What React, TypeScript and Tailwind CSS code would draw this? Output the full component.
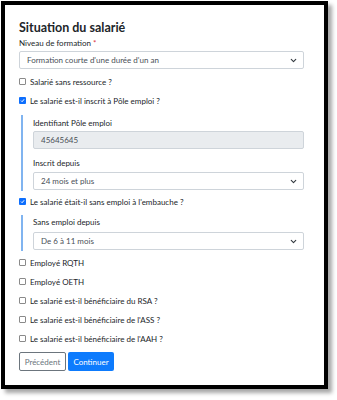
import { ChevronDown } from 'lucide-react';

const font = { fontFamily: 'Lato, "Open Sans", "Liberation Sans", sans-serif' };

function Select({ value }: { value: string }) {
    return (
        <div className="flex items-center justify-between h-[18px] border border-[#ced4da] rounded-[2px] bg-white pl-[7px] pr-[5px] text-[8px] text-[#495057]">
            <span>{value}</span>
            <ChevronDown size={9} strokeWidth={3} className="text-[#343a40]" />
        </div>
    );
}

function Check({ label, checked = false }: { label: string; checked?: boolean }) {
    return (
        <div className="flex items-center h-[19px] gap-[4px] text-[8px] text-[#212529]">
            {checked ? (
                <span className="w-[7px] h-[7px] rounded-[1px] bg-[#0d6efd] flex items-center justify-center">
                    <svg width="5" height="5" viewBox="0 0 10 10">
                        <path d="M2 5.2 L4.2 7.4 L8.2 2.6" fill="none" stroke="white" strokeWidth="2" />
                    </svg>
                </span>
            ) : (
                <span className="w-[7px] h-[7px] rounded-[1px] border border-[#8a8a8a] bg-white" />
            )}
            <span>{label}</span>
        </div>
    );
}

export default function App() {
    return (
        <div className="w-[337px] h-[400px] bg-white pt-[1px] pl-[1px]" style={font}>
            <div className="w-[327px] h-[388px] border-4 border-black bg-white shadow-[4px_4px_4px_rgba(0,0,0,0.35)] pl-[14px] pr-[20px] pt-[15px]">
                <h1 className="text-[12.5px] font-bold text-[#212529] leading-[16px]">Situation du salarié</h1>
                <div className="text-[8px] text-[#212529] leading-[12px] mt-[1px]">
                    Niveau de formation <span className="text-[#dc3545]">*</span>
                </div>
                <div className="mt-[2px]">
                    <Select value="Formation courte d'une durée d'un an" />
                </div>
                <div className="mt-[3px]">
                    <Check label="Salarié sans ressource ?" />
                    <Check label="Le salarié est-il inscrit à Pôle emploi ?" checked />
                </div>
                <div className="mt-[5px] ml-[2px] border-l-2 border-[#80b4f0] pl-[10px] pt-[2px] pb-[1px]">
                    <div className="text-[8px] text-[#212529] leading-[12px]">Identifiant Pôle emploi</div>
                    <div className="mt-[2px] h-[18px] border border-[#ced4da] rounded-[2px] bg-[#e9ecef] pl-[7px] text-[8px] text-[#495057] flex items-center">
                        45645645
                    </div>
                    <div className="text-[8px] text-[#212529] leading-[12px] mt-[8px]">Inscrit depuis</div>
                    <div className="mt-[3px]">
                        <Select value="24 mois et plus" />
                    </div>
                </div>
                <div className="mt-[1px]">
                    <Check label="Le salarié était-il sans emploi à l'embauche ?" checked />
                </div>
                <div className="mt-[4px] ml-[2px] border-l-2 border-[#80b4f0] pl-[10px] pt-[1px] pb-[1px]">
                    <div className="text-[8px] text-[#212529] leading-[12px]">Sans emploi depuis</div>
                    <div className="mt-[4px]">
                        <Select value="De 6 à 11 mois" />
                    </div>
                </div>
                <div className="mt-[2px]">
                    <Check label="Employé RQTH" />
                    <Check label="Employé OETH" />
                    <Check label="Le salarié est-il bénéficiaire du RSA ?" />
                    <Check label="Le salarié est-il bénéficiaire de l'ASS ?" />
                    <Check label="Le salarié est-il bénéficiaire de l'AAH ?" />
                </div>
                <div className="mt-[4px] flex gap-[2px]">
                    <button className="w-[47px] h-[19px] border border-[#6c757d] rounded-[2px] text-[8px] text-[#6c757d] bg-white">
                        Précédent
                    </button>
                    <button className="w-[46px] h-[19px] rounded-[2px] text-[8px] text-white bg-[#0d7bfd]">
                        Continuer
                    </button>
                </div>
            </div>
        </div>
    );
}
